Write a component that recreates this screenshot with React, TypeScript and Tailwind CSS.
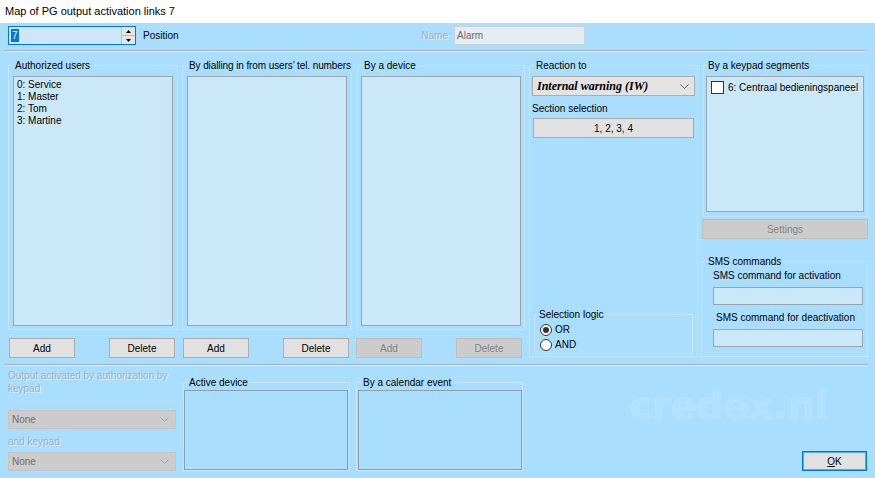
import React from "react";

const btn = "h-[20px] border text-[10px] flex items-center justify-center";
const btnOn = "bg-[#e1e1e1] border-[#adadad] text-black";
const btnOff = "bg-[#cccccc] border-[#bfbfbf] text-[#838383]";
const dim = "text-[#a3b1ba] [text-shadow:1px_1px_0_#d9f0fd]";

function Chevron({ color = "#606060" }: { color?: string }) {
  return (
    <svg width="9" height="5" viewBox="0 0 9 5" className="ml-auto">
      <polyline points="0.5,0.5 4.5,4.5 8.5,0.5" fill="none" stroke={color} strokeWidth="1" />
    </svg>
  );
}

interface GroupProps {
  title: string;
  className?: string;
  legend?: string;
  children?: React.ReactNode;
}

function Group({ title, className = "", legend = "ml-[4px] px-[2px]", children }: GroupProps) {
  return (
    <fieldset className={`min-w-0 border border-[#cae5f5] flex flex-col ${className}`}>
      <legend className={`leading-[13px] whitespace-nowrap ${legend}`}>{title}</legend>
      {children}
    </fieldset>
  );
}

function ListBox({ className = "", children }: { className?: string; children?: React.ReactNode }) {
  return <div className={`shrink-0 bg-[#cbe8f8] border border-[#9aa4ab] ${className}`}>{children}</div>;
}

function Btn({ label, off, className = "" }: { label: string; off?: boolean; className?: string }) {
  return <button className={`${btn} ${off ? btnOff : btnOn} ${className}`}>{label}</button>;
}

function Radio({ label, checked }: { label: string; checked?: boolean }) {
  return (
    <div className="h-[15px] flex items-center gap-[3px]">
      <span className="w-[12px] h-[12px] rounded-full border border-[#333] bg-white flex items-center justify-center">
        {checked && <span className="w-[6px] h-[6px] rounded-full bg-[#333]" />}
      </span>
      {label}
    </div>
  );
}

function Separator({ className = "" }: { className?: string }) {
  return <div className={`h-[2px] border-t border-[#a2b3bd] bg-[#d4eefc] ${className}`} />;
}

function DisabledCombo({ className = "" }: { className?: string }) {
  return (
    <div className={`h-[19px] bg-[#cccccc] border border-[#c4c4c4] flex items-center pl-[3px] pr-[6px] text-[#6d6d6d] ${className}`}>
      None
      <Chevron color="#a8a8a8" />
    </div>
  );
}

export default function App() {
  return (
    <div className="w-[875px] h-[478px] flex flex-col overflow-hidden bg-[#aadefe] text-[10px] text-black [font-family:'Liberation_Sans',Arial,sans-serif]">
      <div className="h-[23px] shrink-0 bg-white flex items-center pl-[5px] text-[11px]">
        Map of PG output activation links 7
      </div>

      {/* position / name */}
      <div className="mt-[3px] h-[19px] flex items-center pl-[8px] pr-[290px]">
        <div className="w-[128px] h-[19px] border border-[#0078d7] bg-[#cce8f8] flex">
          <div className="flex-1 flex items-center pl-[2px]">
            <span className="bg-[#0078d7] text-white px-[1px] leading-[13px]">7</span>
          </div>
          <div className="w-[14px] flex flex-col border-l border-[#b5c0c7] bg-[#e6e6e6]">
            <div className="flex-1 flex items-center justify-center border-b border-[#b5c0c7]">
              <svg width="5" height="3" viewBox="0 0 5 3">
                <polygon points="0,3 2.5,0 5,3" fill="#000" />
              </svg>
            </div>
            <div className="flex-1 flex items-center justify-center">
              <svg width="5" height="3" viewBox="0 0 5 3">
                <polygon points="0,0 2.5,3 5,0" fill="#000" />
              </svg>
            </div>
          </div>
        </div>
        <span className="ml-[7px]">Position</span>
        <span className={`ml-auto mr-[6px] ${dim}`}>Name</span>
        <div className="w-[131px] h-[19px] bg-[#e3edf3] border border-[#c8d4dc] flex items-center pl-[2px] text-[#6d6d6d]">
          Alarm
        </div>
      </div>

      <Separator className="mt-[5px] ml-[4px] w-[861px]" />

      {/* main row */}
      <div className="mt-[7px] h-[299px] shrink-0 flex pl-[8px]">
        <div className="w-[170px] flex flex-col">
          <Group title="Authorized users" className="h-[271px]">
            <ListBox className="h-[250px] mx-[4px] mt-[4px] pt-[2px] pl-[3px] leading-[12px]">
              <div>0: Service</div>
              <div>1: Master</div>
              <div>2: Tom</div>
              <div>3: Martine</div>
            </ListBox>
          </Group>
          <div className="mt-[8px] flex justify-between pl-[1px] pr-[3px]">
            <Btn label="Add" className="w-[66px]" />
            <Btn label="Delete" className="w-[66px]" />
          </div>
        </div>

        <div className="ml-[4px] w-[170px] flex flex-col">
          <Group title="By dialling in from users’ tel. numbers" className="h-[271px]" legend="ml-[4px] px-[2px] tracking-[-0.1px]">
            <ListBox className="h-[250px] mx-[4px] mt-[4px]" />
          </Group>
          <div className="mt-[8px] flex justify-between pl-[1px] pr-[3px]">
            <Btn label="Add" className="w-[66px]" />
            <Btn label="Delete" className="w-[66px]" />
          </div>
        </div>

        <div className="ml-[4px] w-[170px] flex flex-col">
          <Group title="By a device" className="h-[271px] ml-[1px] w-[168px]">
            <ListBox className="h-[250px] mx-[3px] mt-[4px]" />
          </Group>
          <div className="mt-[8px] flex justify-between pr-[4px]">
            <Btn label="Add" off className="w-[66px]" />
            <Btn label="Delete" off className="w-[66px]" />
          </div>
        </div>

        <div className="ml-[3px] w-[169px]">
          <Group title="Reaction to" className="h-[298px]">
            <div className="mx-[2px] mt-[4px] h-[20px] bg-[#e3e3e3] border border-[#acacac] flex items-center pl-[4px] pr-[5px]">
              <span className="[font-family:'Liberation_Serif',serif] font-bold italic text-[12px]">
                Internal warning (IW)
              </span>
              <Chevron />
            </div>
            <div className="mx-[2px] mt-[6px] leading-[13px]">Section selection</div>
            <Btn label="1, 2, 3, 4" className="mx-[3px] mt-[3px]" />
            <Group title="Selection logic" className="mt-auto mx-[4px] mb-[2px] h-[46px]" legend="ml-[2px] px-[2px]">
              <div className="mt-[1px] pl-[5px]">
                <Radio label="OR" checked />
                <Radio label="AND" />
              </div>
            </Group>
          </Group>
        </div>

        <div className="ml-[3px] w-[168px] flex flex-col">
          <Group title="By a keypad segments" className="ml-[2px] w-[165px] h-[158px]" legend="ml-[2px] px-[2px]">
            <ListBox className="h-[136px] ml-[2px] mr-[3px] mt-[4px] pt-[3px] pl-[4px]">
              <div className="flex items-center gap-[4px]">
                <span className="w-[13px] h-[13px] border border-[#333] bg-white" />
                6: Centraal bedieningspaneel
              </div>
            </ListBox>
          </Group>
          <Btn label="Settings" off className="ml-[1px] w-[166px] mt-[2px]" />
          <Group title="SMS commands" className="mt-[16px] w-[167px] h-[102px]" legend="ml-[5px] px-[1px]">
            <div className="ml-[11px] mt-[1px] leading-[13px]">SMS command for activation</div>
            <div className="ml-[11px] mt-[5px] w-[150px] h-[18px] bg-[#cbe8f8] border border-[#9aa4ab]" />
            <div className="ml-[14px] mt-[6px] leading-[13px]">SMS command for deactivation</div>
            <div className="ml-[11px] mt-[5px] w-[150px] h-[18px] bg-[#cbe8f8] border border-[#9aa4ab]" />
          </Group>
        </div>
      </div>

      <Separator className="mt-[6px] ml-[4px] w-[864px]" />

      {/* bottom row */}
      <div className="flex-1 flex pl-[8px]">
        <div className="w-[168px] flex flex-col">
          <div className={`mt-[3px] leading-[13px] ${dim}`}>
            Output activated by authorization by keypad
          </div>
          <DisabledCombo className="mt-[15px]" />
          <div className={`mt-[6px] leading-[13px] ${dim}`}>and keypad</div>
          <DisabledCombo className="mt-[4px]" />
        </div>

        <Group title="Active device" className="ml-[7px] mt-[10px] w-[167px] h-[95px]" legend="ml-[3px] px-[2px]">
          <div className="h-[80px] mt-[1px] mr-[1px] border border-[#8c9fab]" />
        </Group>

        <Group title="By a calendar event" className="ml-[6px] mt-[10px] w-[167px] h-[95px]">
          <div className="h-[80px] mt-[1px] ml-[1px] border border-[#8c9fab]" />
        </Group>

        <div className="flex-1 flex flex-col">
          <div className="ml-[107px] mt-[22px] text-[37px] leading-[37px] font-bold tracking-[0.5px] text-[#b0e1fd] [font-family:'DejaVu_Sans',sans-serif] [text-shadow:0_0_1px_#cdeefe]">
            credex.nl
          </div>
          <button className="mt-auto self-end mr-[8px] mb-[7px] w-[65px] h-[20px] bg-[#e1e1e1] border border-[#0078d7] shadow-[inset_0_0_0_1px_#5ea8e4] text-[10px] flex items-center justify-center">
            <span className="underline">O</span>K
          </button>
        </div>
      </div>
    </div>
  );
}
